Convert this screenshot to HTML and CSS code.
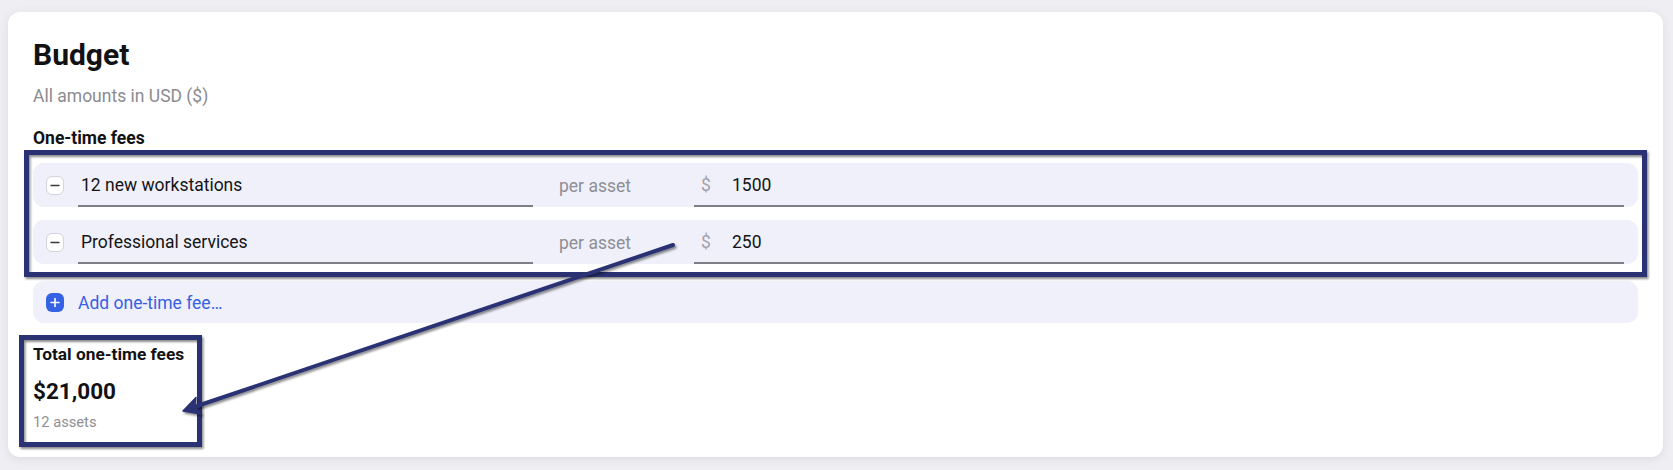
FILE: index.html
```html
<!DOCTYPE html>
<html lang="en">
<head>
<meta charset="utf-8">
<title>Budget</title>
<link rel="stylesheet" href="styles.css">
</head>
<body>
<main class="card">
  <h1 class="title">Budget</h1>
  <p class="subtitle">All amounts in USD ($)</p>
  <h2 class="section-title">One-time fees</h2>
  <div class="fee-list">
    <div class="fee-row">
      <button class="icon-btn remove" aria-label="Remove">
        <svg viewBox="0 0 18 19" width="18" height="19"><line x1="4.5" y1="9.5" x2="13.5" y2="9.5" stroke="#3a3a3e" stroke-width="1.5" stroke-linecap="round"/></svg>
      </button>
      <div class="field name-field">12 new workstations</div>
      <div class="unit">per asset</div>
      <div class="field amount-field"><span class="currency">$</span><span class="amount">1500</span></div>
    </div>
    <div class="fee-row">
      <button class="icon-btn remove" aria-label="Remove">
        <svg viewBox="0 0 18 19" width="18" height="19"><line x1="4.5" y1="9.5" x2="13.5" y2="9.5" stroke="#3a3a3e" stroke-width="1.5" stroke-linecap="round"/></svg>
      </button>
      <div class="field name-field">Professional services</div>
      <div class="unit">per asset</div>
      <div class="field amount-field"><span class="currency">$</span><span class="amount">250</span></div>
    </div>
  </div>
  <div class="add-row">
    <span class="icon-btn add" aria-hidden="true">
      <svg viewBox="0 0 18 19" width="18" height="19"><path d="M9 5.5v8M5 9.5h8" stroke="#fff" stroke-width="1.6" stroke-linecap="round"/></svg>
    </span>
    <span class="add-label">Add one-time fee…</span>
  </div>
  <div class="total">
    <div class="total-label">Total one-time fees</div>
    <div class="total-value">$21,000</div>
    <div class="total-note">12 assets</div>
  </div>
</main>
<svg class="annotations" width="1673" height="470" viewBox="0 0 1673 470" aria-hidden="true">
  <defs>
    <filter id="shadow" x="-5%" y="-5%" width="110%" height="120%">
      <feDropShadow dx="1.5" dy="2" stdDeviation="1" flood-color="#000" flood-opacity="0.45"/>
    </filter>
  </defs>
  <g filter="url(#shadow)" fill="none" stroke="#2c3373" stroke-width="5">
    <rect x="26.5" y="152.5" width="1618" height="122"/>
    <rect x="21.5" y="337.5" width="178" height="107"/>
  </g>
  <g filter="url(#shadow)">
    <line x1="673" y1="245" x2="194" y2="407" stroke="#2c3373" stroke-width="4" stroke-linecap="round"/>
    <polygon points="183,411 196,397.5 194.5,406.5 201,414" fill="#2c3373" stroke="#2c3373" stroke-width="1.5" stroke-linejoin="round"/>
  </g>
</svg>
</body>
</html>
```
FILE: styles.css
```css
* { box-sizing: border-box; }
html, body { margin: 0; padding: 0; }
body {
  background: #efeff3;
  font-family: Roboto, "Noto Sans", "Liberation Sans", sans-serif;
  color: #141416;
  position: relative;
  width: 1673px;
  height: 470px;
  overflow: hidden;
}
.card {
  margin: 12px 10px 0 8px;
  width: 1655px;
  height: 445px;
  background: #ffffff;
  border-radius: 12px;
  box-shadow: 0 2px 10px rgba(40, 40, 70, 0.10);
  padding: 25px 25px 0 25px;
}
.title {
  margin: 0;
  font-size: 30px;
  line-height: 36px;
  font-weight: 700;
  color: #121214;
}
.subtitle {
  margin: 12px 0 0;
  font-size: 17.5px;
  line-height: 22px;
  color: #8b8b90;
}
.section-title {
  margin: 20px 0 0;
  font-size: 17.5px;
  line-height: 22px;
  font-weight: 700;
  color: #121214;
}
.fee-list {
  margin-top: 14px;
  display: flex;
  flex-direction: column;
  gap: 13px;
}
.fee-row {
  height: 44px;
  background: #eff0fa;
  border-radius: 11px;
  display: grid;
  grid-template-columns: 18px 469px 161px 1fr;
  align-items: stretch;
  padding: 0 13px 0 13px;
}
.icon-btn {
  width: 18px;
  height: 19px;
  padding: 0;
  margin: 0;
  border-radius: 5px;
  display: inline-flex;
  align-items: center;
  justify-content: center;
  align-self: center;
}
.icon-btn svg { display: block; }
.remove {
  background: #ffffff;
  border: 1px solid #d3d3da;
  border-radius: 6px;
}
.remove svg { width: 16px; height: 17px; }
.fee-row .remove { margin-top: 1px; }
.field {
  border-bottom: 2px solid #7e7e86;
  font-size: 17.5px;
  display: flex;
  align-items: center;
  padding-top: 2px;
}
.name-field {
  margin-left: 14px;
  padding-left: 3px;
  color: #141416;
}
.unit {
  display: flex;
  align-items: center;
  padding-left: 26px;
  padding-top: 2px;
  font-size: 17.5px;
  color: #8e8e94;
}
.amount-field {
  padding-left: 7px;
  margin-right: 1px;
}
.currency {
  color: #a3a3ab;
  width: 31px;
}
.amount { color: #141416; }
.add-row {
  margin-top: 17px;
  height: 42px;
  background: #eff0fa;
  border-radius: 11px;
  display: flex;
  align-items: center;
  padding-left: 13px;
  gap: 14px;
}
.add {
  background: #3562e4;
  border: none;
  border-radius: 6px;
}
.add-label {
  font-size: 17.5px;
  color: #3760e2;
  padding-top: 1px;
}
.total { margin-top: 20px; }
.total-label {
  font-size: 17.3px;
  line-height: 22px;
  font-weight: 700;
  color: #121214;
}
.total-value {
  margin-top: 12px;
  font-size: 22.5px;
  line-height: 28px;
  font-weight: 700;
  color: #121214;
}
.total-note {
  margin-top: 8px;
  font-size: 14.7px;
  line-height: 18px;
  color: #8e8e94;
}
.annotations {
  position: absolute;
  top: 0;
  left: 0;
  pointer-events: none;
}
```
